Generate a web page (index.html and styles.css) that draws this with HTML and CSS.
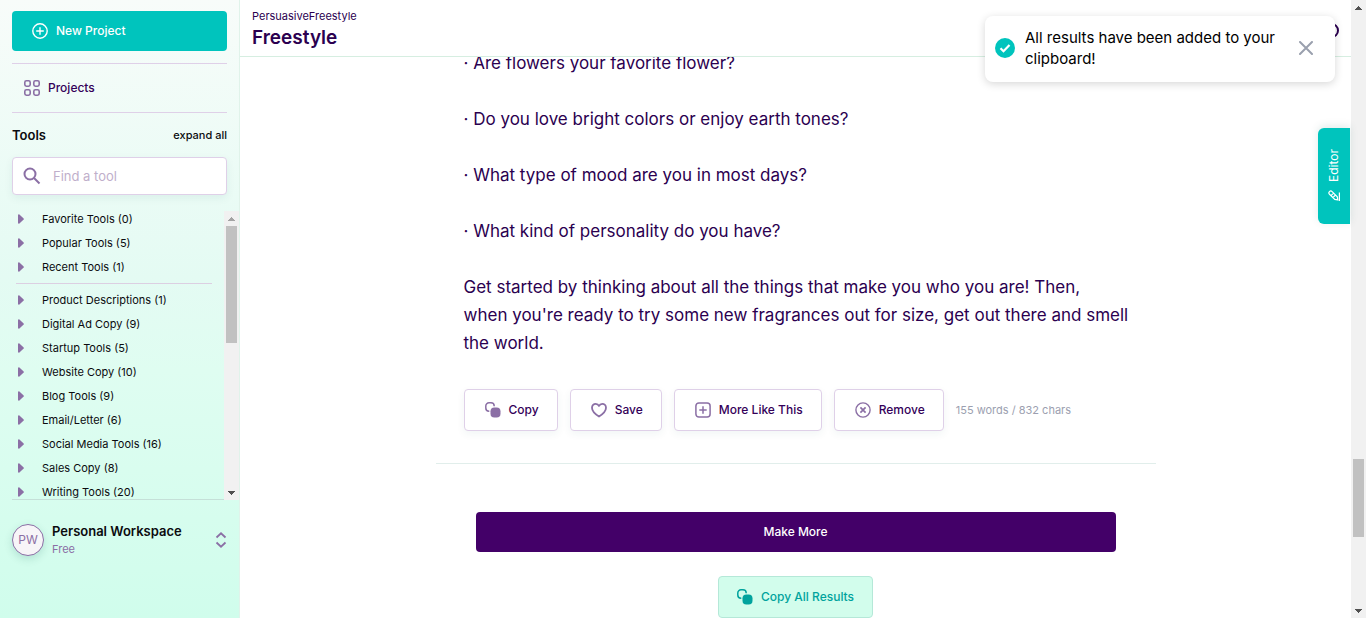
FILE: index.html
```
<!DOCTYPE html>
<html lang="en">
<head>
<meta charset="utf-8">
<title>Freestyle</title>
<link rel="stylesheet" href="styles.css">
</head>
<body>
<svg class="symbols" aria-hidden="true">
  <symbol id="caret" viewBox="0 0 6 10"><path d="M0 1.2C0 .4.8 0 1.4.5L5.4 4.2a1 1 0 0 1 0 1.6L1.4 9.5C.8 10 0 9.6 0 8.8z" fill="currentColor"/></symbol>
  <symbol id="copy" viewBox="0 0 16 16"><path d="M4.300 9.200H4A3.200 3.200 0 0 1 .8 6V4A3.200 3.200 0 0 1 4 .8h2A3.200 3.200 0 0 1 9.200 4v.3" fill="none" stroke="currentColor" stroke-width="1.500"/><rect x="5.500" y="5.500" width="10" height="10" rx="3.800" fill="currentColor"/></symbol>
  <symbol id="up" viewBox="0 0 7 4"><path d="M3 0h1v1h1v1h1v1h1v1H0V3h1V2h1V1h1z" fill="currentColor"/></symbol>
  <symbol id="down" viewBox="0 0 7 4"><path d="M0 0h7v1H6v1H5v1H4v1H3V3H2V2H1V1H0z" fill="currentColor"/></symbol>
</svg>
<div class="app">
  <aside class="sidebar">
    <button class="new-project" type="button">
      <svg width="16" height="16" viewBox="0 0 16 16" fill="none" stroke="currentColor" stroke-width="1.400" stroke-linecap="round"><circle cx="8" cy="8" r="7.200"/><path d="M8 4.700v6.600M4.700 8h6.600"/></svg>
      New Project
    </button>
    <nav class="primary">
      <a class="projects" href="#">
        <svg width="16" height="16" viewBox="0 0 16 16" fill="none" stroke="currentColor" stroke-width="1.600"><rect x=".8" y=".8" width="5.400" height="5.400" rx="1.600"/><rect x="9.800" y=".8" width="5.400" height="5.400" rx="1.600"/><rect x=".8" y="9.800" width="5.400" height="5.400" rx="1.600"/><rect x="9.800" y="9.800" width="5.400" height="5.400" rx="1.600"/></svg>
        Projects
      </a>
    </nav>
    <div class="tools-head">
      <h2>Tools</h2>
      <button class="expand" type="button">expand all</button>
    </div>
    <label class="search">
      <svg width="18" height="18" viewBox="0 0 18 18" fill="none" stroke="currentColor" stroke-width="2"><circle cx="7" cy="7" r="5.500"/><path d="M11 11l5.500 5.500"/></svg>
      <input type="text" placeholder="Find a tool" aria-label="Find a tool">
    </label>
    <div class="tools">
      <div class="tools-list">
        <ul>
          <li><a href="#"><svg class="caret"><use href="#caret"/></svg>Favorite Tools (0)</a></li>
          <li><a href="#"><svg class="caret"><use href="#caret"/></svg>Popular Tools (5)</a></li>
          <li><a href="#"><svg class="caret"><use href="#caret"/></svg>Recent Tools (1)</a></li>
        </ul>
        <ul>
          <li><a href="#"><svg class="caret"><use href="#caret"/></svg>Product Descriptions (1)</a></li>
          <li><a href="#"><svg class="caret"><use href="#caret"/></svg>Digital Ad Copy (9)</a></li>
          <li><a href="#"><svg class="caret"><use href="#caret"/></svg>Startup Tools (5)</a></li>
          <li><a href="#"><svg class="caret"><use href="#caret"/></svg>Website Copy (10)</a></li>
          <li><a href="#"><svg class="caret"><use href="#caret"/></svg>Blog Tools (9)</a></li>
          <li><a href="#"><svg class="caret"><use href="#caret"/></svg>Email/Letter (6)</a></li>
          <li><a href="#"><svg class="caret"><use href="#caret"/></svg>Social Media Tools (16)</a></li>
          <li><a href="#"><svg class="caret"><use href="#caret"/></svg>Sales Copy (8)</a></li>
          <li><a href="#"><svg class="caret"><use href="#caret"/></svg>Writing Tools (20)</a></li>
        </ul>
      </div>
      <div class="scrollbar">
        <svg class="arrow arrow-off"><use href="#up"/></svg>
        <div class="track"><div class="thumb" style="height:45%"></div></div>
        <svg class="arrow"><use href="#down"/></svg>
      </div>
    </div>
    <button class="workspace" type="button">
      <span class="avatar">PW</span>
      <span class="workspace-text"><span class="workspace-name">Personal Workspace</span><span class="plan">Free</span></span>
      <svg width="12" height="16" viewBox="0 0 12 16" fill="none" stroke="currentColor" stroke-width="1.800"><path d="M1.500 5.500L6 1.300l4.500 4.200M1.500 10.500L6 14.700l4.500-4.200"/></svg>
    </button>
  </aside>
  <main class="main">
    <header class="header">
      <div>
        <div class="crumb">PersuasiveFreestyle</div>
        <h1>Freestyle</h1>
      </div>
      <button class="help" type="button" aria-label="Help"></button>
    </header>
    <div class="content">
      <article class="result">
        <div class="copytext">
          <p>· Are flowers your favorite flower?</p>
          <p>· Do you love bright colors or enjoy earth tones?</p>
          <p>· What type of mood are you in most days?</p>
          <p>· What kind of personality do you have?</p>
          <p>Get started by thinking about all the things that make you who you are! Then,<br>when you're ready to try some new fragrances out for size, get out there and smell the world.</p>
        </div>
        <div class="actions">
          <button class="action" type="button"><svg width="16" height="16"><use href="#copy"/></svg>Copy</button>
          <button class="action" type="button"><svg width="16" height="16" viewBox="0 0 16 16" fill="none" stroke="currentColor" stroke-width="1.800" stroke-linejoin="round"><path d="M8 14.600C5.500 13 1 10 1 5.800 1 3.500 2.700 1.800 4.700 1.800c1.400 0 2.700.8 3.300 2.200.6-1.400 1.900-2.200 3.300-2.200 2 0 3.700 1.700 3.700 4C15 10 10.500 13 8 14.600z"/></svg>Save</button>
          <button class="action" type="button"><svg width="16" height="16" viewBox="0 0 16 16" fill="none" stroke="currentColor" stroke-width="1.500"><rect x=".9" y=".9" width="14.200" height="14.200" rx="3"/><path d="M8 4.300v7.400M4.300 8h7.400"/></svg>More Like This</button>
          <button class="action" type="button"><svg width="16" height="16" viewBox="0 0 16 16" fill="none" stroke="currentColor" stroke-width="1.400"><circle cx="8" cy="8" r="7.100"/><path d="M5.400 5.400l5.200 5.200M10.600 5.400l-5.200 5.200" stroke-width="1.700"/></svg>Remove</button>
          <span class="count">155 words / 832 chars</span>
        </div>
      </article>
      <div class="more">
        <button class="make-more" type="button">Make More</button>
        <button class="copy-all" type="button"><svg width="16" height="16"><use href="#copy"/></svg>Copy All Results</button>
      </div>
    </div>
  </main>
  <div class="scrollbar">
    <svg class="arrow"><use href="#up"/></svg>
    <div class="track track-low"><div class="thumb" style="height:15%"></div></div>
    <svg class="arrow"><use href="#down"/></svg>
  </div>
</div>
<div class="toast" role="status">
  <svg width="20" height="20" viewBox="0 0 20 20"><circle cx="10" cy="10" r="10" fill="#00c4bd"/><path d="M5.500 10.300l3 3L14.500 7" fill="none" stroke="#fff" stroke-width="2.200"/></svg>
  <p>All results have been added to your clipboard!</p>
  <button class="close" type="button" aria-label="Close"><svg width="14" height="14" viewBox="0 0 14 14" stroke="currentColor" stroke-width="2" stroke-linecap="round"><path d="M1 1l12 12M13 1L1 13"/></svg></button>
</div>
<button class="editor" type="button">
  <svg width="12" height="12" viewBox="0 0 12 12" fill="none" stroke="currentColor" stroke-width="1.200"><path d="M.6 1v8.500"/><path d="M2.200 2.100l3 .5 5.300 5.200a1.800 1.800 0 0 1-2.600 2.600L2.700 5.100zM6.400 8.900L9 6.300M4.500 7l2.600-2.600"/></svg>
  Editor
</button>
</body>
</html>
```
FILE: styles.css
```
* { box-sizing: border-box; }
body {
  margin: 0;
  background: #fff;
  color: #0b0b0f;
  font-family: Inter, "Liberation Sans", sans-serif;
  font-size: 12px;
  line-height: 16px;
}
h1, h2, p, ul { margin: 0; padding: 0; }
ul { list-style: none; }
a { color: inherit; text-decoration: none; }
button, input { font: inherit; color: inherit; }
button { border: 0; background: none; padding: 0; cursor: pointer; }
svg { display: block; flex: none; }
.symbols { position: absolute; width: 0; height: 0; }

.app { display: flex; height: 100vh; overflow: hidden; }

.sidebar {
  display: flex;
  flex-direction: column;
  flex: none;
  width: 240px;
  padding: 11px 12px 0;
  border-right: 1px solid #e0f3ea;
  background: linear-gradient(#f8fcfa, #e4fbf3 45%, #dffdf1 60%, #d0fdec);
}
.new-project {
  display: flex;
  align-items: center;
  gap: 8px;
  flex: none;
  height: 40px;
  padding: 0 20px;
  border-radius: 4px;
  background: #00c4bd;
  color: #fff;
  font-weight: 500;
}
.primary {
  flex: none;
  margin-top: 12px;
  border: solid #dfd0e8;
  border-width: 1px 0;
}
.projects {
  display: flex;
  align-items: center;
  gap: 8px;
  height: 48px;
  padding: 0 12px;
  color: #340059;
  font-weight: 500;
}
.projects svg, .action svg { color: #8b6fa5; }
.tools-head {
  display: flex;
  justify-content: space-between;
  align-items: center;
  flex: none;
  height: 44px;
}
h2 { font-size: 13px; font-weight: 600; }
.expand { font-size: 11px; font-weight: 500; }
.search {
  display: flex;
  align-items: center;
  gap: 12px;
  flex: none;
  height: 38px;
  padding: 0 10px;
  border: 1px solid #dfd0e8;
  border-radius: 4px;
  background: #fff;
  box-shadow: 0 3px 8px rgba(0, 90, 80, .07);
  color: #8b6fa5;
}
.search input {
  flex: 1;
  min-width: 0;
  border: 0;
  outline: 0;
  padding: 0;
  background: none;
  font-size: 13px;
}
.search input::placeholder { color: #bfafcb; opacity: 1; }
.tools {
  display: flex;
  height: 289px;
  margin-top: 16px;
  margin-right: -12px;
  min-height: 0;
}
.tools-list {
  flex: 1;
  overflow: hidden;
  padding-right: 12px;
  border-bottom: 1px solid #c5e0d8;
  font-size: 11px;
}
.tools-list ul { margin-left: 4px; }
.tools-list ul + ul {
  margin-top: 4px;
  padding-top: 4px;
  border-top: 1px solid #dccfe2;
}
.tools-list a { display: flex; align-items: center; height: 24px; }
.tools-list ul:first-child { margin-top: -4px; }
.caret { width: 6px; height: 10px; margin: 0 18px 0 2px; color: #8b6fa5; }

.scrollbar {
  display: flex;
  flex-direction: column;
  align-items: center;
  flex: none;
  width: 15px;
  background: #f1f1f1;
}
.arrow { width: 7px; height: 4px; margin: 6px 0 5px; color: #505050; }
.arrow-off { color: #a3a3a3; }
.track { display: flex; flex-direction: column; flex: 1; width: 11px; }
.track-low { justify-content: flex-end; padding-bottom: 66px; }
.thumb { flex: none; background: #c1c1c1; }

.workspace {
  display: flex;
  align-items: center;
  gap: 8px;
  height: 80px;
  color: #8b6fa5;
  text-align: left;
}
.avatar {
  display: grid;
  place-items: center;
  width: 32px;
  height: 32px;
  border: 1px solid #8b6fa5;
  border-radius: 50%;
  background: #f7f5f8;
  box-shadow: 0 3px 8px rgba(0, 90, 80, .16);
}
.workspace-text { display: flex; flex-direction: column; flex: 1; gap: 2px; }
.workspace-name { color: #0b0b0f; font-size: 13px; font-weight: 600; }
.plan { font-size: 11px; }

.main { display: flex; flex-direction: column; flex: 1; min-width: 0; color: #2b0050; }
.header {
  display: flex;
  justify-content: space-between;
  align-items: center;
  flex: none;
  height: 57px;
  padding: 4px 12px 0;
  border-bottom: 1px solid #d6eee1;
}
.crumb { font-size: 11px; }
h1 { font-size: 19px; font-weight: 600; line-height: 28px; }
.help { width: 15px; height: 15px; border: 2px solid #2b0050; border-radius: 50%; }
.content {
  display: flex;
  flex-direction: column;
  align-items: center;
  flex: 1;
  min-height: 0;
  overflow: hidden;
}
.result {
  flex: none;
  width: 100%;
  max-width: 720px;
  margin-top: -8px;
  padding: 0 24px 32px 28px;
  border-bottom: 1px solid #e1eeeb;
}
.copytext { display: grid; gap: 28px; font-size: 17px; line-height: 28px; }
.actions { display: flex; align-items: center; gap: 12px; margin-top: 32px; }
.action {
  display: flex;
  align-items: center;
  gap: 8px;
  height: 42px;
  padding: 0 18px 0 20px;
  border: 1px solid #dfd0e8;
  border-radius: 4px;
  background: #fff;
  box-shadow: 0 3px 8px rgba(0, 90, 80, .06);
  color: #340059;
  font-weight: 500;
}
.count { color: #9c9fb0; font-size: 11px; }
.more {
  display: flex;
  flex-direction: column;
  align-items: center;
  gap: 24px;
  flex: none;
  width: 100%;
  max-width: 640px;
  padding-top: 48px;
}
.make-more {
  width: 100%;
  height: 40px;
  border-radius: 4px;
  background: #430068;
  color: #fff;
  font-weight: 500;
}
.copy-all {
  display: flex;
  align-items: center;
  gap: 8px;
  height: 42px;
  padding: 0 18px;
  border: 1px solid #b5e8d8;
  border-radius: 4px;
  background: #d2fdec;
  color: #00a39d;
  font-weight: 500;
}

.toast {
  position: absolute;
  top: 16px;
  right: 31px;
  display: flex;
  align-items: center;
  gap: 10px;
  width: 350px;
  padding: 11px 22px 13px 10px;
  border-radius: 8px;
  background: #fff;
  box-shadow: 0 2px 8px rgba(0, 0, 0, .16);
  color: #000;
  font-size: 15px;
  line-height: 21px;
}
.toast p { flex: 1; }
.close { color: #9aa0ae; }
.editor {
  position: absolute;
  top: 128px;
  right: 16px;
  display: flex;
  align-items: center;
  justify-content: center;
  gap: 8px;
  width: 32px;
  height: 96px;
  border-radius: 0 6px 6px 0;
  background: #00c4bd;
  box-shadow: 0 2px 8px rgba(0, 90, 80, .12);
  color: #fff;
  writing-mode: vertical-rl;
  transform: rotate(180deg);
}
```
